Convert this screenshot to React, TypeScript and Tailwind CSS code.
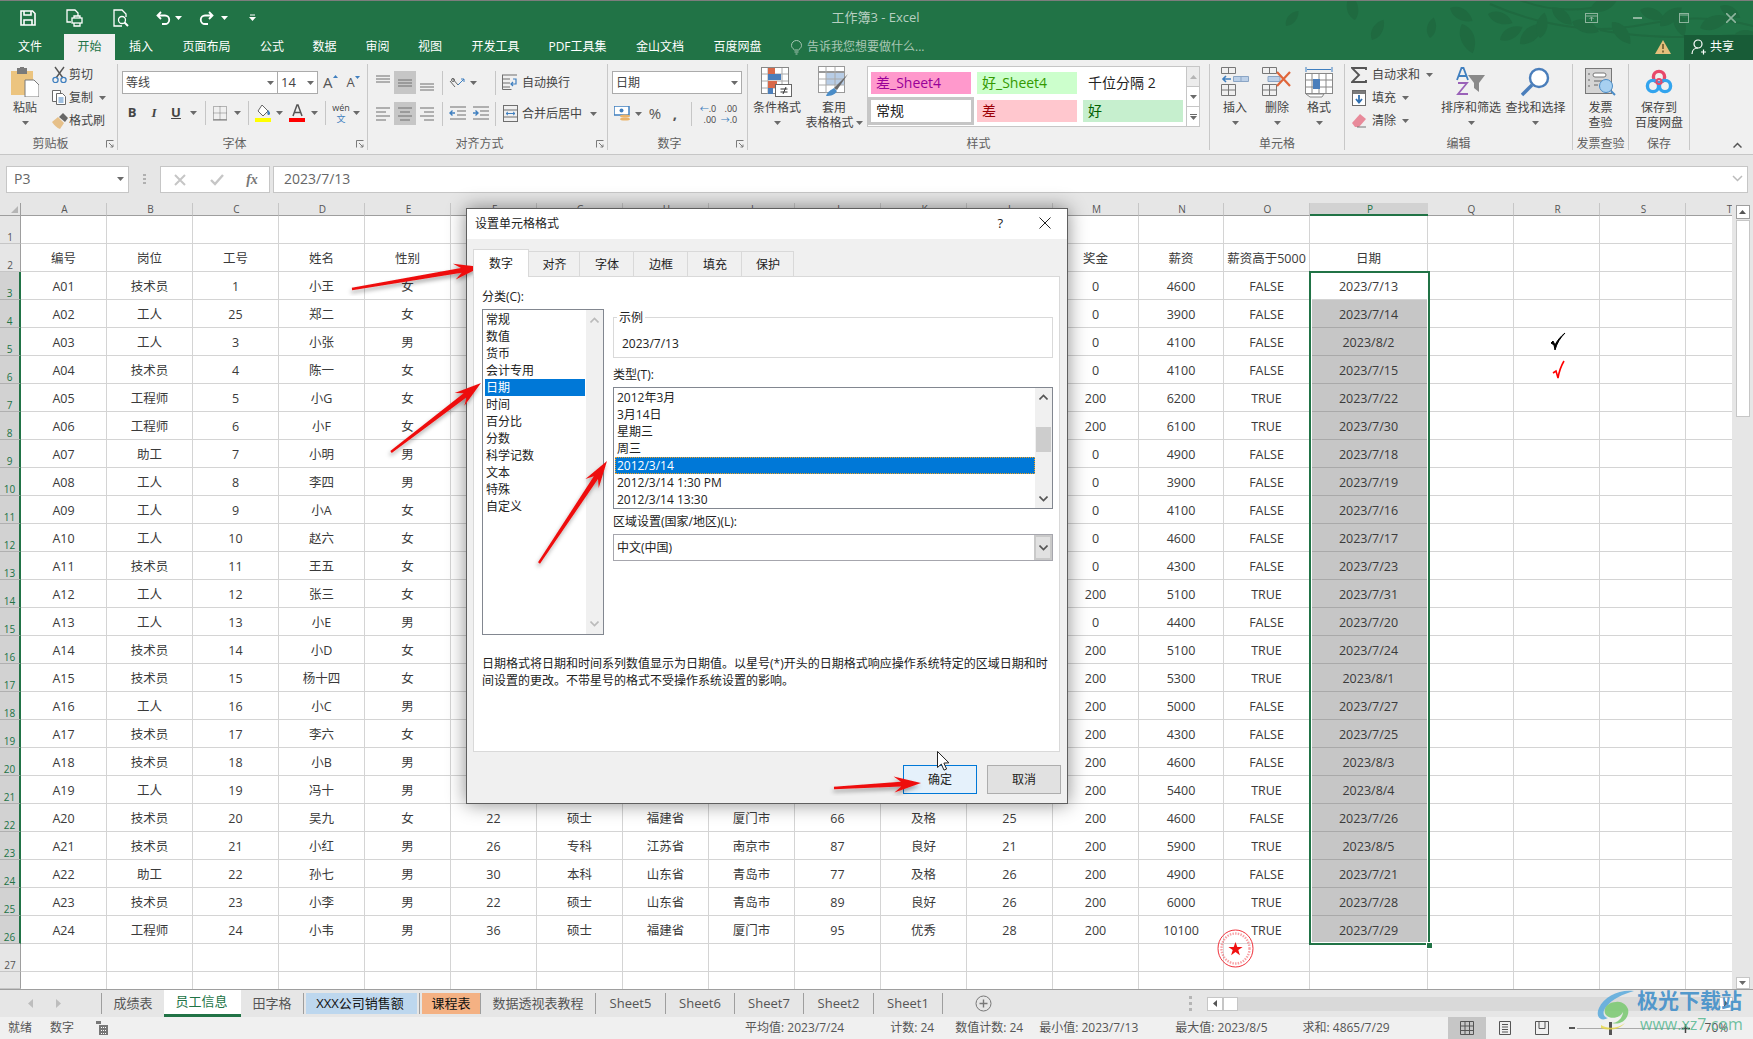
import React from "react";

const ROWS: string[][] = [
  ["A01","技术员","1","小王","女","","","","","","","","0","4600","FALSE","2023/7/13"],
  ["A02","工人","25","郑二","女","","","","","","","","0","3900","FALSE","2023/7/14"],
  ["A03","工人","3","小张","男","","","","","","","","0","4100","FALSE","2023/8/2"],
  ["A04","技术员","4","陈一","女","","","","","","","","0","4100","FALSE","2023/7/15"],
  ["A05","工程师","5","小G","女","","","","","","","","200","6200","TRUE","2023/7/22"],
  ["A06","工程师","6","小F","女","","","","","","","","200","6100","TRUE","2023/7/30"],
  ["A07","助工","7","小明","男","","","","","","","","0","4900","FALSE","2023/7/18"],
  ["A08","工人","8","李四","男","","","","","","","","0","3900","FALSE","2023/7/19"],
  ["A09","工人","9","小A","女","","","","","","","","0","4100","FALSE","2023/7/16"],
  ["A10","工人","10","赵六","女","","","","","","","","0","4600","FALSE","2023/7/17"],
  ["A11","技术员","11","王五","女","","","","","","","","0","4300","FALSE","2023/7/23"],
  ["A12","工人","12","张三","女","","","","","","","","200","5100","TRUE","2023/7/31"],
  ["A13","工人","13","小E","男","","","","","","","","0","4400","FALSE","2023/7/20"],
  ["A14","技术员","14","小D","女","","","","","","","","200","5100","TRUE","2023/7/24"],
  ["A15","技术员","15","杨十四","女","","","","","","","","200","5300","TRUE","2023/8/1"],
  ["A16","工人","16","小C","男","","","","","","","","200","5000","FALSE","2023/7/27"],
  ["A17","技术员","17","李六","女","","","","","","","","200","4300","FALSE","2023/7/25"],
  ["A18","技术员","18","小B","男","","","","","","","","200","4600","FALSE","2023/8/3"],
  ["A19","工人","19","冯十","男","","","","","","","","200","5400","TRUE","2023/8/4"],
  ["A20","技术员","20","吴九","女","22","硕士","福建省","厦门市","66","及格","25","200","4600","FALSE","2023/7/26"],
  ["A21","技术员","21","小红","男","26","专科","江苏省","南京市","87","良好","21","200","5900","TRUE","2023/8/5"],
  ["A22","助工","22","孙七","男","30","本科","山东省","青岛市","77","及格","26","200","4900","FALSE","2023/7/21"],
  ["A23","技术员","23","小李","男","22","硕士","山东省","青岛市","89","良好","26","200","6000","TRUE","2023/7/28"],
  ["A24","工程师","24","小韦","男","36","硕士","福建省","厦门市","95","优秀","28","200","10100","TRUE","2023/7/29"],
];
const HEAD = ["编号","岗位","工号","姓名","性别","","","","","","","","奖金","薪资","薪资高于5000","日期"];
const LETTERS = "ABCDEFGHIJKLMNOPQRST".split("");

const Caret = ({ dark }: { dark?: boolean }) => (
  <svg width="7" height="4" viewBox="0 0 7 4" className="shrink-0"><path d="M0 0h7L3.5 4z" fill={dark ? "#fff" : "#6a6a6a"} /></svg>
);
const VSep = () => <div className="w-px h-[86px] mt-[4px] bg-[#c8c8c8] shrink-0" />;
const MiniSep = () => <div className="w-px h-[24px] bg-[#c6c6c6]" />;
const Launcher = () => (
  <svg width="8" height="8" viewBox="0 0 8 8" fill="none" stroke="#7a7a7a"><path d="M.5 7.5v-7h7" /><path d="M3 3l4 4M7 4.5V7H4.5" /></svg>
);
const Box = ({ w, children }: { w: string; children?: React.ReactNode }) => (
  <div className={`${w} h-full flex items-center justify-center shrink-0`}>{children}</div>
);

function Group({ w, label, launcher, children }: { w: string; label: string; launcher?: boolean; children: React.ReactNode }) {
  return (
    <div className={`${w} h-full flex flex-col shrink-0`}>
      <div className="h-[73px] flex">{children}</div>
      {launcher ? (
        <div className="h-[21px] grid grid-cols-[1fr_auto_1fr_16px] items-center text-[12px] text-[#606060]">
          <span />
          <span className="whitespace-nowrap">{label}</span>
          <span />
          <span className="justify-self-end pr-[3px] flex"><Launcher /></span>
        </div>
      ) : (
        <div className="h-[21px] flex items-center justify-center text-[12px] text-[#606060] whitespace-nowrap">{label}</div>
      )}
    </div>
  );
}
function BigBtn({ w, icon, l1, l2, caret }: { w: string; icon: React.ReactNode; l1: string; l2?: string; caret?: "below" | "side" }) {
  return (
    <div className={`${w} flex flex-col items-center shrink-0 pt-[4px] text-[12px] text-[#444] leading-[15px]`}>
      <div className="h-[36px] flex items-center justify-center">{icon}</div>
      <div className="h-[15px] whitespace-nowrap">{l1}</div>
      <div className="h-[15px] flex items-center justify-center gap-[2px] whitespace-nowrap">
        {l2}
        {caret ? <Caret /> : null}
      </div>
    </div>
  );
}

/* ---------- icons ---------- */
const Lines = ({ kind }: { kind: "left" | "center" | "right" | "top" | "mid" | "bot" }) => {
  const d: Record<string, string> = {
    left: "M1 3h14M1 7h10M1 11h14M1 15h10",
    center: "M1 3h14M3 7h10M1 11h14M3 15h10",
    right: "M1 3h14M5 7h10M1 11h14M5 15h10",
    top: "M1 2h14M1 5h14M1 8h14",
    mid: "M1 6h14M1 9h14M1 12h14",
    bot: "M1 10h14M1 13h14M1 16h14",
  };
  return <svg width="16" height="18" fill="none" stroke="#6e6e6e"><path d={d[kind]} /></svg>;
};
const Excel = {
  Save: () => (
    <svg width="16" height="16" viewBox="0 0 16 16" fill="none" stroke="#fff" strokeWidth="1.6"><path d="M1 1h11.5L15 3.5V15H1z" /><path d="M4 1v4h7V1M4 15v-5h8v5" /></svg>
  ),
  Print: () => (
    <svg width="17" height="18" viewBox="0 0 17 18" fill="none" stroke="#fff" strokeWidth="1.3"><path d="M6 1H1v12h4M6 1h3l3 3v3" /><rect x="6" y="9" width="10" height="5" /><path d="M8 9V7h6v2M8 14v3h6v-3" /></svg>
  ),
  Preview: () => (
    <svg width="16" height="18" viewBox="0 0 16 18" fill="none" stroke="#fff" strokeWidth="1.3"><path d="M9 17H1V1h8l4 4v3" /><circle cx="9" cy="11" r="3.5" /><path d="M11.5 13.5L15 17" strokeWidth="2" /></svg>
  ),
  Undo: () => (
    <svg width="15" height="14" viewBox="0 0 15 14" fill="none" stroke="#fff" strokeWidth="1.8"><path d="M5 1L1.5 4.5 5 8M2 4.5h7a4 4 0 010 8.5H6" /></svg>
  ),
  Redo: () => (
    <svg width="15" height="14" viewBox="0 0 15 14" fill="none" stroke="#fff" strokeWidth="1.8"><path d="M10 1l3.5 3.5L10 8M13 4.5H6a4 4 0 000 8.5h3" /></svg>
  ),
  Paste: () => (
    <svg width="28" height="30" viewBox="0 0 28 30"><path d="M0 4h22v24H0z" fill="#ecc47f" /><rect x="6" y="1" width="10" height="6" fill="#7a7a7a" /><rect x="9" y="0" width="4" height="3" fill="#7a7a7a" /><path d="M14 13h9l5 5v12H14z" fill="#fff" stroke="#7a7a7a" /></svg>
  ),
  Cut: () => (
    <svg width="15" height="17" viewBox="0 0 15 17" fill="none"><path d="M3 1l8 11M12 1L4 12" stroke="#555" strokeWidth="1.4" /><circle cx="3.5" cy="14" r="2.6" stroke="#3f7fbf" strokeWidth="1.3" /><circle cx="11.5" cy="14" r="2.6" stroke="#3f7fbf" strokeWidth="1.3" /></svg>
  ),
  Copy: () => (
    <svg width="15" height="15" viewBox="0 0 15 15" fill="#fff" stroke="#6a6a6a"><path d="M.5.5h8v11h-8z" /><path d="M4.5 3.5h6l3 3v8h-9z" /><path d="M6.5 8h5M6.5 10h5M6.5 12h5" stroke="#3f7fbf" /></svg>
  ),
  Brush: () => (
    <svg width="16" height="16" viewBox="0 0 16 16"><path d="M0 9l6-5 6 6-4 6C5 15 2 12 0 9z" fill="#e6c089" /><path d="M7 4l4-4 5 5-3 4z" fill="#666" /></svg>
  ),
  Wrap: () => (
    <svg width="16" height="17" viewBox="0 0 16 17" fill="none"><path d="M1 1h14M1 5h7M1 9h7M1 13h7" stroke="#6e6e6e" /><path d="M.5.5v15h9" stroke="#6e6e6e" /><path d="M11 5h3v5H9m2-2l-2 2 2 2" stroke="#3f7fbf" strokeWidth="1.2" /></svg>
  ),
  Merge: () => (
    <svg width="15" height="17" viewBox="0 0 15 17" fill="none"><rect x=".5" y=".5" width="14" height="16" stroke="#6e6e6e" /><path d="M1 5h13M1 12h13" stroke="#6e6e6e" /><path d="M3 8.5h9M3 8.5l2-1.6M3 8.5l2 1.6M12 8.5l-2-1.6M12 8.5l-2 1.6" stroke="#3f7fbf" /></svg>
  ),
  Orient: () => (
    <svg width="16" height="16" viewBox="0 0 16 16" fill="none" stroke="#666"><path d="M1 6l5 6M3 3l6 7" /><path d="M9 10l6-6M12 4h3v3" stroke="#3f7fbf" /><circle cx="4" cy="5" r="1.5" /></svg>
  ),
  Outdent: () => (
    <svg width="17" height="16" viewBox="0 0 17 16" fill="none"><path d="M1 1h16M8 5h9M8 9h9M1 13h16" stroke="#6e6e6e" /><path d="M6 7H1m2.5-2.5L1 7l2.5 2.5" stroke="#3f7fbf" strokeWidth="1.4" /></svg>
  ),
  Indent: () => (
    <svg width="17" height="16" viewBox="0 0 17 16" fill="none"><path d="M1 1h16M8 5h9M8 9h9M1 13h16" stroke="#6e6e6e" /><path d="M1 7h5M3.5 4.5L6 7 3.5 9.5" stroke="#3f7fbf" strokeWidth="1.4" /></svg>
  ),
  BorderIco: () => (
    <svg width="14" height="15" viewBox="0 0 14 15" fill="none" stroke="#777" strokeDasharray="1 1"><path d="M.5.5h13v13H.5zM7 .5v13M.5 7h13" /><path d="M0 14h14" strokeDasharray="0" /></svg>
  ),
  Fill: () => (
    <svg width="17" height="18" viewBox="0 0 17 18"><path d="M7 1l6 6-5 5-5-5z" fill="#fff" stroke="#666" /><path d="M13 6c2 2 3 4 1 5-2 0-2-2-1-5z" fill="#3f7fbf" /><rect x="0" y="14" width="16" height="4" fill="#ffff00" /></svg>
  ),
  FontColor: () => (
    <svg width="17" height="18" viewBox="0 0 17 18"><path d="M4 12L8 1h1l4 11M5.5 8.5h6" fill="none" stroke="#555" strokeWidth="1.5" /><rect x="0" y="14" width="16" height="4" fill="#ff0000" /></svg>
  ),
  Currency: () => (
    <svg width="17" height="16" viewBox="0 0 17 16"><rect x="0" y="0" width="15" height="9" fill="#fff" stroke="#3f7fbf" strokeWidth="1.5" /><circle cx="7.5" cy="4.5" r="2" fill="#3f7fbf" /><ellipse cx="11" cy="10" rx="5" ry="1.6" fill="#eab46a" /><ellipse cx="11" cy="13" rx="5" ry="1.6" fill="#eab46a" /></svg>
  ),
  Cond: () => (
    <svg width="32" height="30" viewBox="0 0 32 30" fill="none"><rect x=".5" y=".5" width="27" height="26" stroke="#888" fill="#fff" /><path d="M7 1v26M21 1v26M1 7h26M1 14h26M1 21h26" stroke="#aaa" /><path d="M7 1h7v6H7z" fill="#d8694a" /><path d="M7 7h13v6H7z" fill="#4a7ebb" /><path d="M7 14h9v7H7z" fill="#d8694a" /><path d="M7 21h5v6H7z" fill="#4a7ebb" /><rect x="14.5" y="17.5" width="16" height="12" fill="#fff" stroke="#666" /><path d="M19.5 22h7M19.5 25h7M25 20l-3 7" stroke="#333" /></svg>
  ),
  TableFmt: () => (
    <svg width="32" height="32" viewBox="0 0 32 32" fill="none"><rect x=".5" y=".5" width="26" height="26" stroke="#999" fill="#fff" /><path d="M1 6h26" stroke="#999" strokeWidth="2" /><rect x="8" y="7" width="18" height="12" fill="#b8cde6" /><path d="M8 1v26M17 1v26M1 13h26M1 19h26" stroke="#aaa" /><path d="M30 8L19 24l-3-2z" fill="#6a6a6a" /><path d="M16 22c-3 2-6 3-8 8 5 0 9-1 11-5z" fill="#4a8cc7" /></svg>
  ),
  Insert: () => (
    <svg width="28" height="30" viewBox="0 0 28 30" fill="none" stroke="#777"><path d="M.5.5h14v6H.5zM7.5.5v6M.5 17.5h14v11H.5zM7.5 17.5v11M.5 23h14" /><path d="M12.5 9.5h15v5h-15zM20 9.5v5" fill="#bcd0e8" stroke="#8aa5c5" /><path d="M10 12H2m3-3l-3 3 3 3" stroke="#3f7fbf" strokeWidth="1.6" /></svg>
  ),
  Delete: () => (
    <svg width="30" height="30" viewBox="0 0 30 30" fill="none" stroke="#777"><path d="M.5.5h14v6H.5zM7.5.5v6M.5 17.5h14v11H.5zM7.5 17.5v11M.5 23h14" /><path d="M6 9.5h12v5H6z" fill="#bcd0e8" stroke="#8aa5c5" /><path d="M15 5l13 14M28 5L15 19" stroke="#e0663a" strokeWidth="2.2" /></svg>
  ),
  Format: () => (
    <svg width="28" height="32" viewBox="0 0 28 32" fill="none" stroke="#888"><path d="M1 1v5M27 1v5M2 3.5h24" stroke="#3f7fbf" /><rect x=".5" y="7.5" width="27" height="20" fill="#fff" /><path d="M7 8v20M14 8v20M21 8v20M1 14h26M1 21h26" /><rect x="8" y="13" width="7" height="10" fill="#4a7ebb" stroke="none" /><path d="M1 28h18l-2 3H5z" fill="#fff" /></svg>
  ),
  Sigma: () => (
    <svg width="16" height="16" viewBox="0 0 16 16" fill="none"><path d="M15 3V1H1l7 7-7 7h14v-2" stroke="#555" strokeWidth="1.9" /></svg>
  ),
  FillDown: () => (
    <svg width="14" height="16" viewBox="0 0 14 16"><rect x=".5" y=".5" width="13" height="15" fill="#fff" stroke="#6a6a6a" /><rect x="1" y="1" width="12" height="3" fill="#7a7a7a" /><path d="M7 5v7M4 9l3 3.5L10 9" stroke="#2f6fb0" strokeWidth="1.8" fill="none" /></svg>
  ),
  Eraser: () => (
    <svg width="14" height="14" viewBox="0 0 14 14"><path d="M0 9l8-9 6 5-7 8H3z" fill="#e88a9a" /><path d="M5 13h9" stroke="#777" /></svg>
  ),
  Sort: () => (
    <svg width="30" height="30" viewBox="0 0 30 30"><path d="M1 13L5.500 1h2L12 13M3 9h7" fill="none" stroke="#3f7fbf" strokeWidth="1.8" /><path d="M2 16h9L2 27h10" fill="none" stroke="#9a62b8" strokeWidth="1.8" /><path d="M12 8h17l-6 8v9l-5-4v-5z" fill="#8a8a8a" /></svg>
  ),
  Find: () => (
    <svg width="30" height="30" viewBox="0 0 30 30" fill="none"><circle cx="18" cy="11" r="9" fill="#fff" stroke="#4a7ebb" strokeWidth="2.4" /><path d="M11 18L1 28" stroke="#4a7ebb" strokeWidth="3.4" /></svg>
  ),
  Invoice: () => (
    <svg width="31" height="28" viewBox="0 0 31 28" fill="none"><rect x=".5" y=".5" width="26" height="25" fill="#d4d4d4" stroke="#777" /><rect x="8" y="5" width="13" height="4" rx="2" fill="#fff" stroke="#777" /><path d="M4 5v2M4 11v2M4 17v2M9 13h9M9 17h4" stroke="#666" /><circle cx="21" cy="18" r="6.5" fill="#a7d0f0" stroke="#4a8cc7" /><path d="M26 23l4 4" stroke="#4a8cc7" strokeWidth="2" /></svg>
  ),
  Baidu: () => (
    <svg width="28" height="26" viewBox="0 0 28 26" fill="none" strokeWidth="3.4"><circle cx="14" cy="8" r="5.6" stroke="#e8486a" /><circle cx="8" cy="17" r="5.6" stroke="#32a4ee" /><circle cx="20" cy="17" r="5.6" stroke="#32a4ee" /><circle cx="14" cy="12.5" r="2.5" stroke="#e8486a" strokeWidth="2" /></svg>
  ),
};

function TitleDecor() {
  const leaves = [
    [1286,26,-50,.75],[1355,20,-100,1],[1372,40,-60,.9],[1430,38,-80,.8],[1450,8,30,1],[1462,24,70,1.2],
    [1488,14,20,1],[1500,40,-30,1],[1520,44,-40,1.2],[1540,38,-80,1],[1552,8,40,1],[1572,22,20,1.1],
    [1590,10,-20,1.1],[1612,22,50,1.1],[1640,10,20,1],[1660,26,-40,1.1],[1675,12,70,1],[1700,28,-20,1.2],
    [1720,6,30,.9],[1735,34,10,1],
  ];
  return (
    <svg width="1753" height="60" viewBox="0 0 1753 60" className="absolute left-0 top-0 pointer-events-none">
      <path d="M1490 4c40 18 90 28 130 24s70-18 133-2M1600 30c30 6 80 10 153 4M1520 0c30 12 60 12 90 4" fill="none" stroke="#1f6a40" strokeWidth="2" />
      {leaves.map(([x, y, r, s], i) => (
        <path key={i} transform={`translate(${x} ${y}) rotate(${r}) scale(${s})`} d="M0 0C6-8 18-8 26 0 18 7 6 7 0 0z" fill="#1f6a40" />
      ))}
    </svg>
  );
}

function TitleBar() {
  return (
    <div className="h-[34px] flex items-center text-white border-t border-[#7d7d7d] shrink-0">
      <Box w="w-[20px]" />
      <Box w="w-[16px]"><Excel.Save /></Box>
      <Box w="w-[30px]" />
      <Box w="w-[17px]"><Excel.Print /></Box>
      <Box w="w-[30px]" />
      <Box w="w-[16px]"><Excel.Preview /></Box>
      <Box w="w-[26px]" />
      <Box w="w-[16px]"><Excel.Undo /></Box>
      <Box w="w-[14px]"><Caret dark /></Box>
      <Box w="w-[13px]" />
      <Box w="w-[16px]"><Excel.Redo /></Box>
      <Box w="w-[21px]"><Caret dark /></Box>
      <Box w="w-[35px]">
        <svg width="7" height="7"><path d="M1 1h5" stroke="#fff" /><path d="M0 3h7L3.5 7z" fill="#fff" /></svg>
      </Box>
      <div className="w-[1211px] shrink-0 text-center text-[13px] text-[#b7cfc1]">工作簿3 - Excel</div>
      <div className="flex items-center gap-[35px] text-[#8db49d] ml-[104px]">
        <svg width="13" height="10" fill="none" stroke="#8db49d"><rect x=".5" y=".5" width="12" height="9" /><path d="M1 3h11M6.5 8V4M4.5 6l2-2 2 2" /></svg>
        <div className="w-[9px] h-[2px] bg-[#8db49d]" />
        <svg width="10" height="10" className="ml-[2px]" fill="none" stroke="#8db49d"><rect x=".5" y=".5" width="9" height="9" /><path d="M1 2h8" /></svg>
        <svg width="10" height="10" className="ml-[2px]" stroke="#8db49d" strokeWidth="1.6"><path d="M0 0l10 10M10 0L0 10" /></svg>
      </div>
    </div>
  );
}

function TabRow() {
  const tabs: [string, string][] = [
    ["文件", "w-[64px] pr-[4px]"], ["开始", "w-[51px]"], ["插入", "w-[52px]"], ["页面布局", "w-[79px]"], ["公式", "w-[52px]"],
    ["数据", "w-[53px]"], ["审阅", "w-[53px]"], ["视图", "w-[52px]"], ["开发工具", "w-[79px]"], ["PDF工具集", "w-[85px]"],
    ["金山文档", "w-[80px]"], ["百度网盘", "w-[75px]"],
  ];
  return (
    <div className="h-[26px] flex shrink-0 text-[12px] text-white">
      {tabs.map(([t, w]) => (
        <div key={t} className={`${w} h-full flex items-center justify-center shrink-0 ${t === "开始" ? "bg-[#f0f0f0] text-[#217346]" : ""}`}>{t}</div>
      ))}
      <div className="ml-[16px] flex items-center gap-[5px] text-[#a9c7b5]">
        <svg width="11" height="15" fill="none" stroke="#a9c7b5"><path d="M3.5 10C1 8 .5 6.500.5 5.500a5 5 0 0110 0c0 1-.5 2.500-3 4.500zM3.500 12h4M4.500 14h2" /></svg>
        告诉我您想要做什么...
      </div>
      <div className="ml-auto flex items-center h-full">
        <svg width="16" height="14" className="mr-[13px]"><path d="M8 0l8 14H0z" fill="#e5c07b" /><path d="M8 4v5M8 10.500v2" stroke="#5a4a20" strokeWidth="1.4" /></svg>
        <div className="w-[69px] h-[25px] bg-[#185c37] flex items-center gap-[4px] pl-[7px]">
          <svg width="15" height="16" fill="none" stroke="#fff" strokeWidth="1.200"><circle cx="7" cy="5" r="4" /><path d="M1 15c0-4 3-6 6-6M10 13h5M12.500 10.500v5" /></svg>
          共享
        </div>
      </div>
    </div>
  );
}

function Ribbon() {
  const Small = ({ icon, text, caret, w }: { icon: React.ReactNode; text: string; caret?: boolean; w: string }) => (
    <div className="h-[23px] flex items-center">
      <Box w={w}>{icon}</Box>
      <span className="whitespace-nowrap">{text}</span>
      {caret ? <span className="ml-[6px] flex"><Caret /></span> : null}
    </div>
  );
  const StyleCell = ({ cls, t }: { cls: string; t: string }) => (
    <div className={`h-[22px] flex items-center pl-[5px] pb-[2px] text-[14px] ${cls}`}>{t}</div>
  );
  return (
    <div className="h-[95px] bg-[#f0f0f0] border-b border-[#c6c6c6] flex shrink-0 text-[12px] text-[#444]">
      <Group w="w-[117px]" label="剪贴板" launcher>
        <BigBtn w="w-[50px]" icon={<Excel.Paste />} l1="粘贴" caret="below" />
        <div className="flex flex-col pt-[3px]">
          <Small w="w-[19px]" icon={<Excel.Cut />} text="剪切" />
          <Small w="w-[19px]" icon={<Excel.Copy />} text="复制" caret />
          <Small w="w-[19px]" icon={<Excel.Brush />} text="格式刷" />
        </div>
      </Group>
      <VSep />
      <Group w="w-[249px]" label="字体" launcher>
        <div className="flex flex-col pt-[11px] pl-[4px]">
          <div className="h-[23px] flex">
            <div className="w-[156px] bg-white border border-[#ababab] flex items-center px-[3px] justify-between text-[12px]">等线<Caret /></div>
            <div className="w-[40px] bg-white border border-[#ababab] border-l-0 flex items-center px-[3px] justify-between text-[13px]">14<Caret /></div>
            <div className="flex items-center pl-[5px] gap-[9px] text-[15px] text-[#555]">
              <span className="flex items-start">A<svg width="5" height="3" className="mt-[4px]"><path d="M0 3h5L2.500 0z" fill="#3f7fbf" /></svg></span>
              <span className="flex items-start text-[13px]">A<svg width="5" height="3" className="mt-[3px]"><path d="M0 0h5L2.500 3z" fill="#3f7fbf" /></svg></span>
            </div>
          </div>
          <div className="h-[22px] mt-[8px] flex items-center text-[13px]">
            <Box w="w-[20px]"><b>B</b></Box>
            <Box w="w-[24px]"><i className="font-['Liberation_Serif',serif] font-bold">I</i></Box>
            <Box w="w-[20px]"><u className="font-bold">U</u></Box>
            <Box w="w-[14px]"><Caret /></Box>
            <Box w="w-[10px]"><MiniSep /></Box>
            <Box w="w-[20px]"><Excel.BorderIco /></Box>
            <Box w="w-[14px]"><Caret /></Box>
            <Box w="w-[8px]"><MiniSep /></Box>
            <Box w="w-[22px]"><Excel.Fill /></Box>
            <Box w="w-[10px]"><Caret /></Box>
            <Box w="w-[26px]"><Excel.FontColor /></Box>
            <Box w="w-[8px]"><Caret /></Box>
            <Box w="w-[14px]"><MiniSep /></Box>
            <Box w="w-[18px]"><span className="flex flex-col items-center leading-[11px] text-[9px]">wén<span className="text-[#3f7fbf]">文</span></span></Box>
            <Box w="w-[12px]"><Caret /></Box>
          </div>
        </div>
      </Group>
      <VSep />
      <Group w="w-[239px]" label="对齐方式" launcher>
        <div className="flex flex-col pt-[11px] pl-[4px]">
          <div className="h-[23px] flex items-center">
            <Box w="w-[22px]"><Lines kind="top" /></Box>
            <Box w="w-[22px]"><div className="w-full h-full bg-[#c6c6c6] flex items-center justify-center"><Lines kind="mid" /></div></Box>
            <Box w="w-[22px]"><Lines kind="bot" /></Box>
            <Box w="w-[8px]"><MiniSep /></Box>
            <Box w="w-[22px]"><Excel.Orient /></Box>
            <Box w="w-[10px]"><Caret /></Box>
            <Box w="w-[13px]" />
            <Box w="w-[9px]"><MiniSep /></Box>
            <Box w="w-[20px]"><Excel.Wrap /></Box>
            <span className="ml-[2px] whitespace-nowrap">自动换行</span>
          </div>
          <div className="h-[23px] mt-[8px] flex items-center">
            <Box w="w-[22px]"><Lines kind="left" /></Box>
            <Box w="w-[22px]"><div className="w-full h-full bg-[#c6c6c6] flex items-center justify-center"><Lines kind="center" /></div></Box>
            <Box w="w-[22px]"><Lines kind="right" /></Box>
            <Box w="w-[8px]"><MiniSep /></Box>
            <Box w="w-[23px]"><Excel.Outdent /></Box>
            <Box w="w-[22px]"><Excel.Indent /></Box>
            <Box w="w-[9px]"><MiniSep /></Box>
            <Box w="w-[20px]"><Excel.Merge /></Box>
            <span className="ml-[2px] whitespace-nowrap">合并后居中</span>
            <span className="ml-[8px] flex"><Caret /></span>
          </div>
        </div>
      </Group>
      <VSep />
      <Group w="w-[139px]" label="数字" launcher>
        <div className="flex flex-col pt-[11px] pl-[4px]">
          <div className="h-[23px] w-[130px] bg-white border border-[#ababab] flex items-center justify-between px-[3px]">日期<Caret /></div>
          <div className="h-[23px] mt-[8px] flex items-center">
            <Box w="w-[20px]"><Excel.Currency /></Box>
            <Box w="w-[12px]"><Caret /></Box>
            <Box w="w-[22px]"><span className="text-[15px] text-[#555]">%</span></Box>
            <Box w="w-[18px]"><span className="text-[15px] font-bold text-[#555]">,</span></Box>
            <Box w="w-[14px]"><MiniSep /></Box>
            <Box w="w-[20px]"><span className="text-[9px] leading-[11px] text-[#444] flex flex-col items-end"><span><span className="text-[#3f7fbf]">←</span>.0</span><span>.00</span></span></Box>
            <Box w="w-[22px]"><span className="text-[9px] leading-[11px] text-[#444] flex flex-col items-end"><span>.00</span><span><span className="text-[#3f7fbf]">→</span>.0</span></span></Box>
          </div>
        </div>
      </Group>
      <VSep />
      <Group w="w-[461px]" label="样式">
        <BigBtn w="w-[58px]" icon={<Excel.Cond />} l1="条件格式" caret="below" />
        <BigBtn w="w-[56px]" icon={<Excel.TableFmt />} l1="套用" l2="表格格式" caret="side" />
        <div className="ml-[5px] mt-[6px] h-[61px] flex">
          <div className="w-[320px] bg-white border border-[#c6c6c6] pt-[5px] pl-[3px] grid grid-cols-[100px_100px_100px] gap-x-[6px] gap-y-[6px] content-start">
            <StyleCell cls="bg-[#ff99cc] text-[#990099]" t="差_Sheet4" />
            <StyleCell cls="bg-[#ccffcc] text-[#339900]" t="好_Sheet4" />
            <StyleCell cls="text-[#222]" t="千位分隔 2" />
            <StyleCell cls="text-[#222] outline-[3px] outline-[#c6c6c6]" t="常规" />
            <StyleCell cls="bg-[#ffc7ce] text-[#9c0006]" t="差" />
            <StyleCell cls="bg-[#c6efce] text-[#006100]" t="好" />
          </div>
          <div className="w-[13px] flex flex-col bg-white border border-l-0 border-[#c6c6c6]">
            <div className="flex-1 flex items-center justify-center bg-[#ececec] border-b border-[#c6c6c6]"><svg width="7" height="4"><path d="M0 4h7L3.500 0z" fill="#b5b5b5" /></svg></div>
            <div className="flex-1 flex items-center justify-center border-b border-[#c6c6c6]"><Caret /></div>
            <div className="flex-1 flex flex-col gap-[1px] items-center justify-center"><div className="w-[7px] h-px bg-[#6a6a6a]" /><Caret /></div>
          </div>
        </div>
      </Group>
      <VSep />
      <Group w="w-[134px]" label="单元格">
        <div className="w-[4px]" />
        <BigBtn w="w-[42px]" icon={<Excel.Insert />} l1="插入" caret="below" />
        <BigBtn w="w-[42px]" icon={<Excel.Delete />} l1="删除" caret="below" />
        <BigBtn w="w-[42px]" icon={<Excel.Format />} l1="格式" caret="below" />
      </Group>
      <VSep />
      <Group w="w-[227px]" label="编辑">
        <div className="flex flex-col pt-[3px] w-[94px] shrink-0">
          <Small w="w-[27px]" icon={<Excel.Sigma />} text="自动求和" caret />
          <Small w="w-[27px]" icon={<Excel.FillDown />} text="填充" caret />
          <Small w="w-[27px]" icon={<Excel.Eraser />} text="清除" caret />
        </div>
        <BigBtn w="w-[64px]" icon={<Excel.Sort />} l1="排序和筛选" caret="below" />
        <BigBtn w="w-[65px]" icon={<Excel.Find />} l1="查找和选择" caret="below" />
      </Group>
      <VSep />
      <Group w="w-[55px]" label="发票查验">
        <BigBtn w="w-[55px]" icon={<Excel.Invoice />} l1="发票" l2="查验" />
      </Group>
      <VSep />
      <Group w="w-[60px]" label="保存">
        <BigBtn w="w-[60px]" icon={<Excel.Baidu />} l1="保存到" l2="百度网盘" />
      </Group>
      <VSep />
      <div className="flex-1 flex justify-end items-end pb-[6px] pr-[11px]">
        <svg width="9" height="6" fill="none" stroke="#555" strokeWidth="1.500"><path d="M.5 5.500L4.500 1.500l4 4" /></svg>
      </div>
    </div>
  );
}

function FormulaBar() {
  return (
    <div className="h-[48px] bg-[#e6e6e6] pt-[11px] pl-[6px] flex shrink-0">
      <div className="w-[123px] h-[27px] bg-white border border-[#c6c6c6] flex items-center justify-between pl-[7px] pr-[4px] pb-[2px] text-[14px] text-[#666]">
        P3
        <Caret />
      </div>
      <div className="w-[31px] h-[27px] flex items-center justify-center">
        <svg width="3" height="11"><path d="M0 0h3v2H0zM0 4h3v2H0zM0 8h3v2H0z" fill="#b0b0b0" /></svg>
      </div>
      <div className="w-[110px] h-[27px] bg-white border border-[#c6c6c6] flex items-center text-[#999]">
        <Box w="w-[38px]"><svg width="12" height="12" stroke="#c6c6c6" strokeWidth="2"><path d="M1 1l10 10M11 1L1 11" /></svg></Box>
        <Box w="w-[36px]"><svg width="14" height="12" fill="none" stroke="#c6c6c6" strokeWidth="2.400"><path d="M1 6l4 4 8-9" /></svg></Box>
        <Box w="w-[34px]"><i className="font-['Liberation_Serif',serif] text-[14px] font-bold text-[#777]">fx</i></Box>
      </div>
      <div className="w-[1475px] ml-[3px] h-[27px] bg-white border border-[#c6c6c6] flex items-center justify-between pl-[10px] pr-[4px] pb-[2px] text-[14px] text-[#666]">
        2023/7/13
        <svg width="11" height="7" fill="none" stroke="#bbb" strokeWidth="1.500"><path d="M1 1l4.500 4.500L10 1" /></svg>
      </div>
    </div>
  );
}

function Sheet() {
  const empty = new Array(20).fill("");
  const cellBase = "border-r border-b flex items-center justify-center pt-[3px] whitespace-nowrap";
  const rowHead = (label: string, sel: boolean, key: string) => (
    <div key={key} className={`border-b flex items-end justify-center text-[10px] leading-[12px] ${sel ? "bg-[#d2d2d2] text-[#217346] border-r-2 border-r-[#217346] border-b-[#b0b0b0]" : "bg-[#e6e6e6] text-[#555] border-r border-r-[#9e9e9e] border-b-[#c6c6c6]"}`}>{label}</div>
  );
  const renderRow = (n: number, values: string[], sel: boolean) => (
    <React.Fragment key={n}>
      {rowHead(String(n), sel, `h${n}`)}
      {LETTERS.map((L, i) => {
        const isP = L === "P";
        const grey = isP && n > 3 && sel;
        const mark = L === "R" && n === 5 ? "k" : L === "R" && n === 6 ? "r" : "";
        return (
          <div key={L} className={`${cellBase} ${grey ? "bg-[#c6c6c6] border-[#a9a9a9]" : "border-[#d4d4d4]"}`}>
            {mark === "k" ? (
              <svg width="16" height="19" viewBox="0 0 16 19" className="ml-[3px] -mt-[3px]"><path d="M1 11l3 2 1 5C7 11 10 6 15 1 10 5 7 9 5 13L3 9z" fill="#000" stroke="#000" /></svg>
            ) : mark === "r" ? (
              <svg width="13" height="20" viewBox="0 0 13 20" fill="none" stroke="#f00" strokeWidth="1.600" className="ml-[3px] -mt-[3px]"><path d="M1 13l3-2 2 7c1-6 3-12 6-17" /></svg>
            ) : (
              values[i] || ""
            )}
          </div>
        );
      })}
    </React.Fragment>
  );
  return (
    <div className="flex-1 min-h-0 flex bg-white relative overflow-hidden">
      <div className="relative w-[1732px] h-[786px] shrink-0 overflow-hidden">
        <div className="grid grid-cols-[21px_repeat(13,86px)_85px_86px_118px_repeat(3,86px)_86px] grid-rows-[13px_repeat(27,28px)_17px] text-[12.500px] text-[#3a3a3a]">
          <div className="bg-[#e6e6e6] border-r border-b border-[#9e9e9e] flex items-end justify-end p-[2px]">
            <svg width="7" height="7"><path d="M7 0v7H0z" fill="#b5b5b5" /></svg>
          </div>
          {LETTERS.map((L) => (
            <div key={L} className={`flex items-center justify-center pl-[2px] text-[10px] leading-none ${L === "P" ? "bg-[#d2d2d2] text-[#217346] border-b-2 border-b-[#217346]" : "bg-[#e6e6e6] text-[#555] border-b border-b-[#9e9e9e] border-r border-r-[#c6c6c6]"}`}>{L}</div>
          ))}
          {renderRow(1, empty, false)}
          {renderRow(2, HEAD, false)}
          {ROWS.map((r, i) => renderRow(i + 3, r, true))}
          {renderRow(27, empty, false)}
          {rowHead("", false, "hx")}
          {LETTERS.map((L) => <div key={L} className="border-r border-[#d4d4d4]" />)}
        </div>
        {/* selection outline */}
        <div className="absolute left-[1309px] top-[68px] w-[121px] h-[674px] border-2 border-[#217346] shadow-[inset_0_0_0_1px_#fff] pointer-events-none" />
        <div className="absolute left-[1426px] top-[739px] w-[5px] h-[5px] bg-[#217346] border border-white box-content pointer-events-none" />
      </div>
      <div className="flex-1 bg-[#e6e6e6] flex flex-col items-center pt-[2px]">
        <div className="w-[14px] h-[14px] bg-white border border-[#9e9e9e] flex items-center justify-center"><svg width="7" height="4"><path d="M0 4h7L3.500 0z" fill="#555" /></svg></div>
        <div className="w-[14px] h-[197px] bg-white border border-[#c6c6c6] mt-px" />
        <div className="flex-1" />
        <div className="w-[14px] h-[12px] bg-white border border-[#c6c6c6] flex items-center justify-center"><Caret /></div>
      </div>
    </div>
  );
}

function SheetTabs() {
  const Sep = () => <div className="w-px h-[21px] bg-[#9e9e9e] shrink-0" />;
  const T = ({ w, t, cls }: { w: string; t: string; cls?: string }) => (
    <div className={`${w} shrink-0 h-[21px] flex items-center justify-center whitespace-nowrap ${cls ?? "text-[#555]"}`}>{t}</div>
  );
  return (
    <div className="h-[28px] bg-[#e6e6e6] border-t border-[#9e9e9e] flex items-center shrink-0 text-[13px]">
      <div className="w-[101px] shrink-0 flex items-center gap-[23px] pl-[28px]">
        <svg width="5" height="9"><path d="M5 0v9L0 4.500z" fill="#bdbdbd" /></svg>
        <svg width="5" height="9"><path d="M0 0v9l5-4.500z" fill="#bdbdbd" /></svg>
      </div>
      <Sep />
      <T w="w-[62px]" t="成绩表" />
      <div className="w-[77px] h-[27px] shrink-0 bg-white border-b-[3px] border-[#217346] text-[#217346] flex items-center justify-center pb-[1px] pr-[2px]">员工信息</div>
      <T w="w-[62px]" t="田字格" />
      <Sep />
      <div className="w-[2px] shrink-0" />
      <T w="w-[111px]" t="XXX公司销售额" cls="bg-[#bdd7ee] text-[#111] pr-[3px]" />
      <div className="w-[2px] shrink-0" />
      <Sep />
      <div className="w-[2px] shrink-0" />
      <T w="w-[58px]" t="课程表" cls="bg-[#f4b183] text-[#111]" />
      <Sep />
      <T w="w-[114px]" t="数据透视表教程" />
      <Sep />
      <T w="w-[69px]" t="Sheet5" />
      <Sep />
      <T w="w-[68px]" t="Sheet6" />
      <Sep />
      <T w="w-[68px]" t="Sheet7" />
      <Sep />
      <T w="w-[69px]" t="Sheet2" />
      <Sep />
      <T w="w-[68px]" t="Sheet1" />
      <Sep />
      <div className="w-[81px] shrink-0 flex justify-center">
        <svg width="17" height="17" fill="none" stroke="#777"><circle cx="8.500" cy="8.500" r="7.500" /><path d="M8.500 4.500v8M4.500 8.500h8" strokeWidth="1.400" /></svg>
      </div>
      <div className="w-[183px] shrink-0 flex justify-end pr-[15px]">
        <svg width="3" height="15"><path d="M0 0h3v3H0zM0 6h3v3H0zM0 12h3v3H0z" fill="#b5b5b5" /></svg>
      </div>
      <div className="flex-1 h-[14px] bg-[#d9d9d9] flex mr-[20px]">
        <div className="w-[16px] bg-white border border-[#c6c6c6] flex items-center justify-center"><svg width="4" height="7"><path d="M4 0v7L0 3.500z" fill="#555" /></svg></div>
        <div className="w-[15px] bg-white border border-[#c6c6c6]" />
        <div className="flex-1" />
        <div className="w-[14px] bg-white border border-[#c6c6c6] flex items-center justify-center"><svg width="4" height="7"><path d="M0 0v7l4-3.500z" fill="#555" /></svg></div>
      </div>
    </div>
  );
}

function StatusBar() {
  return (
    <div className="h-[22px] bg-[#f0f0f0] flex items-center shrink-0 text-[12px] text-[#555] whitespace-nowrap">
      <span className="ml-[8px]">就绪</span>
      <span className="ml-[18px]">数字</span>
      <svg width="12" height="14" className="ml-[22px]" fill="#777"><path d="M0 0h5v3H0zM3 4h9v10H3z" /><path d="M5 6h1v1H5zM7 6h1v1H7zM9 6h1v1H9zM5 9h1v1H5zM7 9h1v1H7zM9 9h1v1H9zM5 12h1v1H5zM7 12h1v1H7zM9 12h1v1H9z" fill="#fff" /></svg>
      <span className="ml-[637px]">平均值: 2023/7/24</span>
      <span className="ml-[46px]">计数: 24</span>
      <span className="ml-[21px]">数值计数: 24</span>
      <span className="ml-[16px]">最小值: 2023/7/13</span>
      <span className="ml-[37px]">最大值: 2023/8/5</span>
      <span className="ml-[35px]">求和: 4865/7/29</span>
      <div className="ml-[58px] w-[38px] h-full bg-[#c6c6c6] flex items-center justify-center">
        <svg width="14" height="14" fill="none" stroke="#555"><path d="M.5.5h13v13H.5zM.5 5h13M.5 9.500h13M5 .5v13M9.500.5v13" /></svg>
      </div>
      <svg width="12" height="14" className="ml-[13px]" fill="none" stroke="#555"><path d="M.5.5h11v13H.5zM3 3.500h6M3 6h6M3 8.500h6M3 11h6" /></svg>
      <svg width="14" height="14" className="ml-[24px]" fill="none" stroke="#555"><path d="M.5.5h13v13H.5zM4 .5v7h6v-7" /></svg>
      <div className="ml-[20px] w-[6px] h-[2px] bg-[#555]" />
      <div className="ml-[2px] w-[105px] flex items-center relative">
        <div className="w-full h-px bg-[#aaa]" />
        <div className="absolute left-[32px] w-[3px] h-[13px] bg-[#555]" />
      </div>
      <svg width="9" height="9" className="ml-[-1px]" stroke="#444" strokeWidth="1.500"><path d="M4.500 0v9M0 4.500h9" /></svg>
      <span className="ml-[15px]">70%</span>
    </div>
  );
}

function Dialog() {
  const cats = ["常规","数值","货币","会计专用","日期","时间","百分比","分数","科学记数","文本","特殊","自定义"];
  const types = ["2012年3月","3月14日","星期三","周三","2012/3/14","2012/3/14 1:30 PM","2012/3/14 13:30"];
  const tabs: [string, string][] = [["对齐","w-[51px]"],["字体","w-[54px]"],["边框","w-[54px]"],["填充","w-[54px]"],["保护","w-[52px]"]];
  const up = <svg width="9" height="6" fill="none" stroke="#bbb" strokeWidth="1.600"><path d="M.5 5.500l4-4 4 4" /></svg>;
  const down = <svg width="9" height="6" fill="none" stroke="#bbb" strokeWidth="1.600"><path d="M.5.500l4 4 4-4" /></svg>;
  const upD = <svg width="9" height="6" fill="none" stroke="#555" strokeWidth="1.600"><path d="M.5 5.500l4-4 4 4" /></svg>;
  const downD = <svg width="9" height="6" fill="none" stroke="#555" strokeWidth="1.600"><path d="M.5.500l4 4 4-4" /></svg>;
  return (
    <div className="absolute left-[466px] top-[208px] w-[602px] h-[596px] bg-[#f0f0f0] border border-[#5f5f5f] shadow-[0_0_18px_rgba(0,0,0,0.45)] flex flex-col text-[12px] text-[#222] leading-[17px]">
      <div className="h-[30px] bg-white flex items-center pl-[8px] pb-[2px] shrink-0">
        <span className="text-[12px]">设置单元格格式</span>
        <span className="ml-auto text-[13px] mr-[36px]">?</span>
        <svg width="12" height="12" className="mr-[16px]" stroke="#222"><path d="M.5.500l11 11M11.500.500l-11 11" /></svg>
      </div>
      <div className="h-[37px] flex items-end pl-[6px] shrink-0">
        <div className="w-[56px] h-[28px] bg-white border border-[#d9d9d9] border-b-0 flex items-center justify-center relative top-px z-10">数字</div>
        {tabs.map(([t, w]) => (
          <div key={t} className={`${w} h-[25px] border border-l-0 border-[#d9d9d9] border-b-0 flex items-center justify-center pl-[1px]`}>{t}</div>
        ))}
      </div>
      <div className="w-[587px] h-[476px] ml-[6px] bg-white border border-[#d9d9d9] shrink-0 flex flex-col">
        <div className="flex pl-[8px] pt-[11px]">
          <div className="w-[122px] shrink-0 flex flex-col">
            <div className="h-[17px]">分类(C):</div>
            <div className="mt-[4px] h-[326px] border border-[#828790] flex">
              <div className="flex-1 pt-[1px] pl-[2px]">
                {cats.map((c) => (
                  <div key={c} className={`h-[17px] pl-[1px] mr-px ${c === "日期" ? "bg-[#0078d7] text-white" : ""}`}>{c}</div>
                ))}
              </div>
              <div className="w-[17px] bg-[#f0f0f0] flex flex-col items-center justify-between py-[7px] shrink-0">{up}{down}</div>
            </div>
          </div>
          <div className="w-[440px] ml-[9px] flex flex-col pt-[29px]">
            <div className="h-[41px] border border-[#d9d9d9] relative flex items-end pl-[8px] pb-[5px]">
              <span className="absolute left-[3px] -top-[9px] bg-white px-[2px]">示例</span>
              2023/7/13
            </div>
            <div className="h-[17px] mt-[8px]">类型(T):</div>
            <div className="h-[122px] mt-[4px] border border-[#828790] flex">
              <div className="flex-1 pl-px pt-px">
                {types.map((t) => (
                  <div key={t} className={`h-[17px] pl-[2px] ${t === "2012/3/14" ? "bg-[#0078d7] text-white outline-1 -outline-offset-1 outline-dotted outline-[#f7a11a]" : ""}`}>{t}</div>
                ))}
              </div>
              <div className="w-[17px] bg-[#f0f0f0] flex flex-col items-center py-[6px] shrink-0">
                {upD}
                <div className="w-[15px] h-[25px] bg-[#cdcdcd] mt-[27px]" />
                <div className="flex-1" />
                {downD}
              </div>
            </div>
            <div className="h-[17px] mt-[4px]">区域设置(国家/地区)(L):</div>
            <div className="h-[27px] mt-[4px] border border-[#a6a6ad] flex items-center pl-[3px]">
              中文(中国)
              <div className="ml-auto w-[18px] h-full bg-[#e1e1e1] border-2 border-[#c9c9c9] flex items-center justify-center">{downD}</div>
            </div>
          </div>
        </div>
        <div className="ml-[8px] mt-[20px] whitespace-nowrap">
          <div>日期格式将日期和时间系列数值显示为日期值。以星号(*)开头的日期格式响应操作系统特定的区域日期和时</div>
          <div>间设置的更改。不带星号的格式不受操作系统设置的影响。</div>
        </div>
      </div>
      <div className="flex justify-end gap-[10px] pr-[6px] mt-[13px]">
        <div className="w-[74px] h-[29px] bg-[#e5f1fb] border border-[#0078d7] flex items-center justify-center">确定</div>
        <div className="w-[74px] h-[29px] bg-[#e1e1e1] border border-[#adadad] flex items-center justify-center">取消</div>
      </div>
    </div>
  );
}

function arrowPts(x1: number, y1: number, x2: number, y2: number) {
  const dx = x2 - x1, dy = y2 - y1, L = Math.hypot(dx, dy);
  const ux = dx / L, uy = dy / L, nx = -uy, ny = ux;
  const at = (d: number, w: number) => `${(x1 + ux * d + nx * w).toFixed(1)},${(y1 + uy * d + ny * w).toFixed(1)}`;
  return [at(0, -1.2), at(L - 20, -2.500), at(L - 27, -8), at(L, 0), at(L - 27, 8), at(L - 20, 2.500), at(0, 1.2)].join(" ");
}

function Overlays() {
  const arrows: [number, number, number, number][] = [
    [352, 289, 481, 267],
    [391, 452, 481, 383],
    [539, 563, 607, 461],
    [834, 788, 921, 783],
  ];
  return (
    <>
      <svg width="1753" height="1039" className="absolute left-0 top-0 pointer-events-none">
        <defs>
          <filter id="sh" x="-20%" y="-20%" width="140%" height="140%"><feDropShadow dx="-1" dy="3" stdDeviation="2" floodColor="#000" floodOpacity="0.35" /></filter>
        </defs>
        {arrows.map((a, i) => (
          <polygon key={i} points={arrowPts(a[0], a[1], a[2], a[3])} fill="#ee1111" filter="url(#sh)" />
        ))}
        {/* mouse pointer */}
        <path d="M937.500 751.500v16l3.800-3.400 2.700 6 2.600-1.100-2.700-5.900 5-.3z" fill="#fff" stroke="#222" />
        {/* stamp */}
        <g fill="none" stroke="#f0303a">
          <ellipse cx="1235.500" cy="948.500" rx="17.500" ry="18.500" strokeWidth="1" />
          <ellipse cx="1235.500" cy="948.500" rx="14" ry="15" strokeWidth="2.400" strokeDasharray="1.500 1.200" opacity="0.45" />
        </g>
        <path d="M1235.500 942l1.800 5h5.300l-4.300 3.100 1.600 5.200-4.400-3.200-4.400 3.200 1.600-5.200-4.300-3.100h5.300z" fill="#f01010" />
        {/* watermark swirl */}
        <g fill="none">
          <path d="M1634 991c-14-2-30 5-35 17-4 9 2 14 9 10-5-1-6-6-2-11 6-8 17-13 28-16z" fill="#58a9dc" opacity="0.85" />
          <path d="M1616 1002c-9 0-14 8-10 13 5 5 14 3 17-3 0 5-5 11-11 11 10 3 18-6 16-14-2-5-7-8-12-7z" fill="#78c86e" opacity="0.85" />
          <path d="M1601 1025c6 4 16 4 24-2-6 7-16 8-24 5z" fill="#e8d84c" opacity="0.85" />
        </g>
      </svg>
      <div className="absolute left-[1637px] top-[987px] text-[21px] leading-[26px] font-bold text-[#3f8ec9]/90 whitespace-nowrap pointer-events-none">极光下载站</div>
      <div className="absolute left-[1640px] top-[1014px] text-[16px] leading-[20px] text-[#4cb38a]/80 whitespace-nowrap pointer-events-none">www.xz7.com</div>
    </>
  );
}

export default function App() {
  return (
    <div className="relative w-[1753px] h-[1039px] overflow-hidden flex flex-col bg-white font-['Open_Sans','Noto_Sans_CJK_SC',sans-serif]">
      <div className="bg-[#217346] relative shrink-0">
        <TitleDecor />
        <div className="relative">
          <TitleBar />
          <TabRow />
        </div>
      </div>
      <Ribbon />
      <FormulaBar />
      <Sheet />
      <SheetTabs />
      <StatusBar />
      <Dialog />
      <Overlays />
    </div>
  );
}
